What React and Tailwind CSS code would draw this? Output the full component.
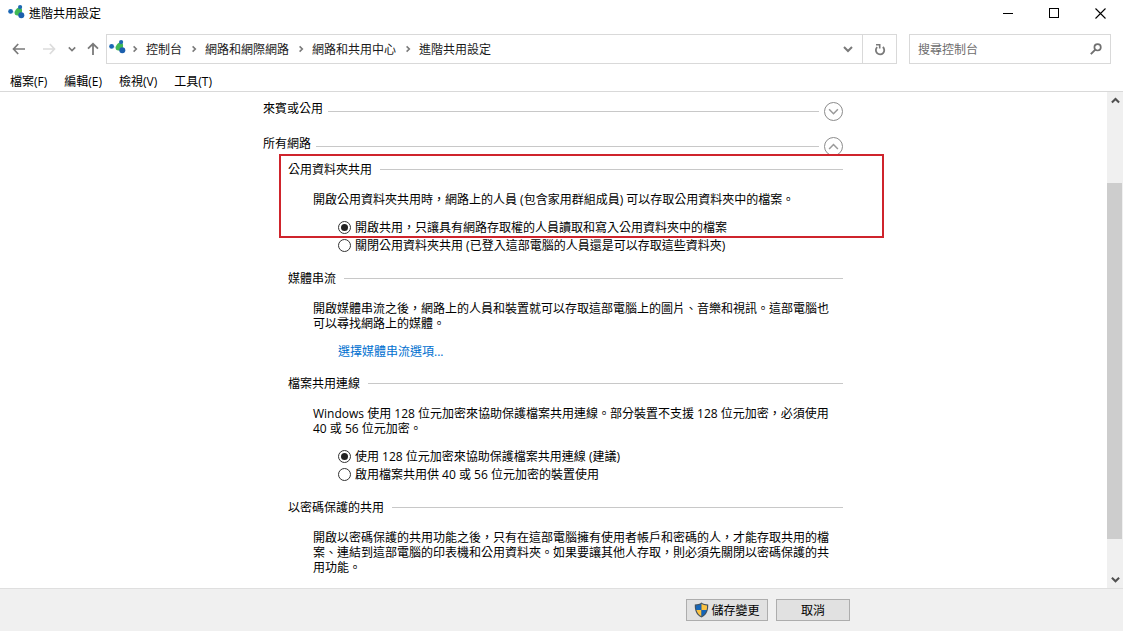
import { useState } from "react";

const crumbs = ["控制台", "網路和網際網路", "網路和共用中心", "進階共用設定"];
const menus = ["檔案(F)", "編輯(E)", "檢視(V)", "工具(T)"];

const NetworkIcon = () => (
  <svg width="17" height="14" viewBox="0 0 17 14" aria-hidden="true" className="shrink-0">
    <path d="M2.600 6.500 9 7.500" fill="none" stroke="#b9dbe6" strokeWidth="1.200" />
    <path d="M9.600 3c1.600-.9 3.800-.4 4.300 1 .4 1.900.2 3.900-.9 5.400-1.500 1.500-4.700 1.400-6 0C5.800 7.600 7.600 4.200 9.600 3Z" fill="#41b955" />
    <circle cx="2.600" cy="6.400" r="2.400" fill="#1b67b5" />
    <circle cx="12.100" cy="2.100" r="2.100" fill="#1d6ab3" />
    <circle cx="13.300" cy="10.200" r="3" fill="#1b5fae" />
  </svg>
);

const ShieldIcon = () => (
  <svg width="15" height="16" viewBox="0 0 15 16" aria-hidden="true" className="shrink-0">
    <path d="M7.500.5C5.700 1.900 3.500 2.400.8 2.400c-.3 6 1.400 10.600 6.700 13.100 5.300-2.500 7-7.100 6.700-13.100C11.500 2.400 9.300 1.900 7.500.5Z" fill="#44525e" />
    <path d="M7.500 1.800C5.900 2.900 4.100 3.400 2 3.500 1.900 5.200 2 6.700 2.400 8h5.100Z" fill="#1565b8" />
    <path d="M7.500 1.800c1.600 1.100 3.400 1.600 5.500 1.700.1 1.700 0 3.200-.4 4.500H7.500Z" fill="#fbc343" />
    <path d="M2.400 8c.8 2.900 2.500 4.900 5.100 6.300V8Z" fill="#fbc343" />
    <path d="M12.600 8c-.8 2.900-2.500 4.900-5.100 6.300V8Z" fill="#1565b8" />
  </svg>
);

const Chevron = ({ d, size = 8, color = "#7a7a7a", width = 1.6 }) => (
  <svg width={size} height={size} viewBox="0 0 8 8" fill="none" stroke={color} strokeWidth={width} aria-hidden="true">
    <path d={d} />
  </svg>
);

const UP = "M.8 5.800 4 2.600l3.200 3.200";
const DOWN = "M.8 2.400 4 5.600l3.200-3.200";
const RIGHT = "M2.600 1.400 5.300 4 2.600 6.600";

const TitleBar = () => (
  <header className="flex h-[27px] items-center pl-2">
    <span className="mb-1">
      <NetworkIcon />
    </span>
    <h1 className="ml-1 flex-1">進階共用設定</h1>
    <button type="button" aria-label="最小化" className="grid h-full w-[46px] place-items-center">
      <svg width="11" height="11" viewBox="0 0 11 11" stroke="#000" shapeRendering="crispEdges">
        <path d="M0 5.500h10" />
      </svg>
    </button>
    <button type="button" aria-label="最大化" className="grid h-full w-[46px] place-items-center">
      <svg width="11" height="11" viewBox="0 0 11 11" fill="none" stroke="#000" shapeRendering="crispEdges">
        <path d="M.5.5h9v9h-9z" />
      </svg>
    </button>
    <button type="button" aria-label="關閉" className="grid h-full w-[46px] place-items-center">
      <svg width="11" height="11" viewBox="0 0 11 11" fill="none" stroke="#000" strokeWidth="1.100">
        <path d="m.5.5 10 10M10.500.5l-10 10" />
      </svg>
    </button>
  </header>
);

const NavBar = () => (
  <div className="mt-[7px] flex h-[30px] items-stretch pr-3">
    <div className="flex w-[106px] shrink-0 items-center pl-3">
      <button type="button" aria-label="上一頁">
        <svg width="14" height="12" viewBox="0 0 14 12" fill="none" stroke="#7a7a7a" strokeWidth="1.700">
          <path d="M6.200 1 1.500 6l4.700 5M1.500 6H13" />
        </svg>
      </button>
      <button type="button" aria-label="下一頁" disabled className="ml-4">
        <svg width="14" height="12" viewBox="0 0 14 12" fill="none" stroke="#dcdcdc" strokeWidth="1.700">
          <path d="m7.800 1 4.700 5-4.700 5M12.500 6H1" />
        </svg>
      </button>
      <button type="button" aria-label="最近的位置" className="ml-3">
        <Chevron d={DOWN} />
      </button>
      <button type="button" aria-label="上移" className="ml-[11px]">
        <svg width="12" height="14" viewBox="0 0 12 14" fill="none" stroke="#7a7a7a" strokeWidth="1.800">
          <path d="M1 6.700 6 1.800l5 4.900M6 1.800V13" />
        </svg>
      </button>
    </div>
    <div className="flex flex-1 border border-[#d9d9d9]">
      <nav aria-label="路徑" className="flex flex-1 items-center pl-[2px]">
        <span className="-mr-[3px] mb-1">
          <NetworkIcon />
        </span>
        {crumbs.map((name) => (
          <span key={name} className="flex items-center">
            <span className="grid w-[23px] place-items-center">
              <Chevron d={RIGHT} />
            </span>
            <a href="#" className="text-[#1a1a1a]">{name}</a>
          </span>
        ))}
      </nav>
      <button type="button" aria-label="先前的位置" className="grid w-7 place-items-center">
        <Chevron d={DOWN} size={10} />
      </button>
      <button type="button" aria-label="重新整理" className="grid w-[34px] place-items-center border-l border-[#d9d9d9]">
        <svg width="12" height="13" viewBox="0 0 12 13" fill="none" stroke="#7a7a7a" strokeWidth="1.800">
          <path d="M8.800 4A4.200 4.200 0 1 1 3.200 4.100" />
          <path d="M2 1.800h3.700v3.800" strokeWidth="1.600" />
        </svg>
      </button>
    </div>
    <form className="ml-3 flex w-[202px] items-center border border-[#d9d9d9] pl-2 pr-2" onSubmit={(e) => e.preventDefault()}>
      <input type="search" aria-label="搜尋控制台" placeholder="搜尋控制台" className="min-w-0 flex-1 outline-none placeholder:text-[#6d6d6d]" />
      <button type="submit" aria-label="搜尋">
        <svg width="12" height="12" viewBox="0 0 12 12" fill="none" stroke="#707070" strokeWidth="1.700">
          <circle cx="7.600" cy="4.300" r="3.200" />
          <path d="M5.300 6.700.8 11.200" strokeWidth="1.900" />
        </svg>
      </button>
    </form>
  </div>
);

const GroupRow = ({ title, open }) => (
  <div className="flex h-5 items-center gap-[5px]">
    <h2 className="self-start">{title}</h2>
    <hr className="flex-1 border-[#c8c8c8]" />
    <button
      type="button"
      aria-label={title}
      aria-expanded={open}
      className="grid size-[19px] place-items-center rounded-full border border-[#8c8c8c]"
    >
      <Chevron d={open ? UP : DOWN} size={11} color="#999" width={1.1} />
    </button>
  </div>
);

const Section = ({ title, text, marked, children }) => (
  <section className="relative">
    <div className="flex items-center gap-2">
      <h3>{title}</h3>
      <hr className="flex-1 border-[#c8c8c8]" />
    </div>
    <div className="pl-[25px] pt-[15px]">
      <p className="max-w-[522px]">{text}</p>
      {children}
    </div>
    {marked && (
      <div className="pointer-events-none absolute -left-[9px] -right-[41px] -top-2 h-[84px] border-2 border-[#cf242c]" />
    )}
  </section>
);

const RadioList = ({ name, options }) => {
  const [picked, setPicked] = useState(0);

  return (
    <div role="radiogroup" className="mt-[11px] pl-[25px]">
      {options.map((label, index) => (
        <label key={label} className="flex h-[18px] items-center gap-1">
          <input
            type="radio"
            name={name}
            checked={picked === index}
            onChange={() => setPicked(index)}
            className="size-[13px] shrink-0 appearance-none rounded-full border border-[#333] bg-white before:m-[2px] before:block before:size-[7px] before:rounded-full checked:before:bg-[#222]"
          />
          {label}
        </label>
      ))}
    </div>
  );
};

const ScrollBar = () => (
  <div className="flex w-4 shrink-0 flex-col bg-[#f0f0f0]" aria-hidden="true">
    <div className="grid h-[17px] place-items-center">
      <Chevron d={UP} size={9} color="#505050" width={1.8} />
    </div>
    <div className="flex-[74]" />
    <div className="mr-px flex-[356] bg-[#cdcdcd]" />
    <div className="flex-[32]" />
    <div className="grid h-[17px] place-items-center">
      <Chevron d={DOWN} size={9} color="#505050" width={1.8} />
    </div>
  </div>
);

export default function App() {
  return (
    <div
      lang="zh-Hant-TW"
      className="flex h-screen flex-col bg-white font-['Open_Sans','Noto_Sans_CJK_TC',sans-serif] text-[12px] leading-[15px] text-black"
    >
      <TitleBar />
      <NavBar />
      <div role="menubar" className="flex h-7 items-center gap-[17px] border-b border-[#d9d9d9] pl-[10px] pt-2">
        {menus.map((name) => (
          <button key={name} type="button" role="menuitem">{name}</button>
        ))}
      </div>

      <div className="flex min-h-0 flex-1">
        <main className="min-w-0 flex-1 overflow-hidden pr-px">
          <div className="mx-auto w-[580px] max-w-full pt-[9px]">
            <GroupRow title="來賓或公用" open={false} />
            <div className="h-[15px]" />
            <GroupRow title="所有網路" open />
            <div className="flex flex-col gap-[17px] pl-[25px] pt-[6px]">
              <Section
                title="公用資料夾共用"
                text="開啟公用資料夾共用時，網路上的人員 (包含家用群組成員) 可以存取公用資料夾中的檔案。"
                marked
              >
                <RadioList
                  name="public-folder"
                  options={[
                    "開啟共用，只讓具有網路存取權的人員讀取和寫入公用資料夾中的檔案",
                    "關閉公用資料夾共用 (已登入這部電腦的人員還是可以存取這些資料夾)",
                  ]}
                />
              </Section>
              <Section
                title="媒體串流"
                text="開啟媒體串流之後，網路上的人員和裝置就可以存取這部電腦上的圖片、音樂和視訊。這部電腦也可以尋找網路上的媒體。"
              >
                <div className="mt-[13px] pl-[25px]">
                  <a href="#" className="text-[#0070d0]">選擇媒體串流選項...</a>
                </div>
              </Section>
              <Section
                title="檔案共用連線"
                text="Windows 使用 128 位元加密來協助保護檔案共用連線。部分裝置不支援 128 位元加密，必須使用 40 或 56 位元加密。"
              >
                <RadioList
                  name="encryption"
                  options={[
                    "使用 128 位元加密來協助保護檔案共用連線 (建議)",
                    "啟用檔案共用供 40 或 56 位元加密的裝置使用",
                  ]}
                />
              </Section>
              <Section
                title="以密碼保護的共用"
                text="開啟以密碼保護的共用功能之後，只有在這部電腦擁有使用者帳戶和密碼的人，才能存取共用的檔案、連結到這部電腦的印表機和公用資料夾。如果要讓其他人存取，則必須先關閉以密碼保護的共用功能。"
              />
            </div>
          </div>
        </main>
        <ScrollBar />
      </div>

      <footer className="border-t border-[#dfdfdf] bg-[#f0f0f0] py-[10px]">
        <div className="mx-auto flex w-[577px] max-w-full justify-end gap-2">
          <button type="button" className="flex h-[22px] w-[82px] items-center justify-center gap-[2px] border border-[#adadad] bg-[#e1e1e1]">
            <ShieldIcon />
            儲存變更
          </button>
          <button type="button" className="h-[22px] w-[74px] border border-[#adadad] bg-[#e1e1e1]">取消</button>
        </div>
      </footer>
    </div>
  );
}
